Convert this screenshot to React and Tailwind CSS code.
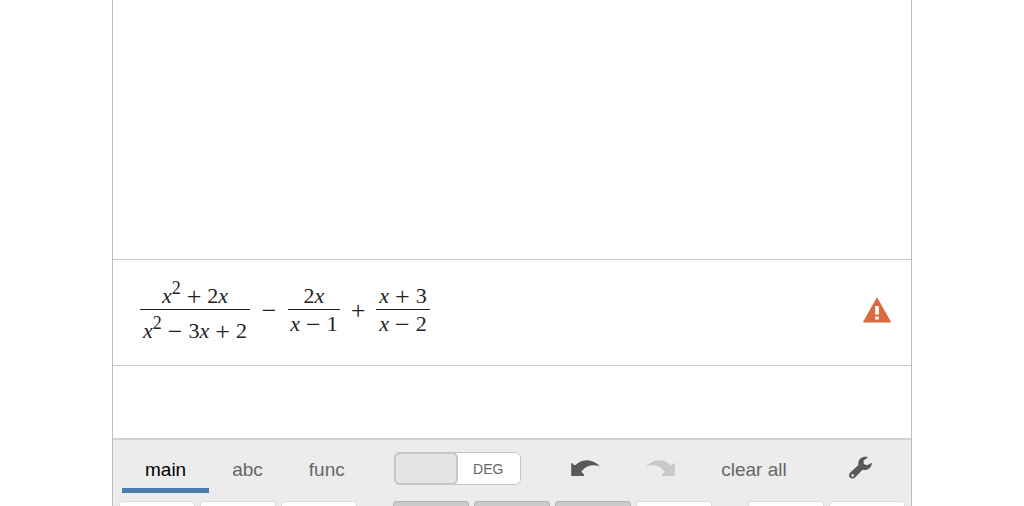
import React, { useState } from 'react';

const Var = ({ power }) => (
  <span>
    <i>x</i>
    {power && <sup className="text-[18px] leading-none">{power}</sup>}
  </span>
);

const Op = ({ children }) => (
  <span className="text-[26px] leading-[20px]">{children}</span>
);

const Fraction = ({ top, bottom, className, tall }) => (
  <span className={`flex flex-col items-center ${className}`}>
    <span className="flex h-7 items-end gap-1.5 pb-0.5 leading-[22px]">{top}</span>
    <span className="h-px w-full bg-[#222]" />
    <span className={`flex items-end gap-1.5 leading-[22px] ${tall ? 'h-8' : 'h-[25px]'}`}>{bottom}</span>
  </span>
);

const Expression = () => (
  <div className="flex items-start font-['Liberation_Serif',serif] text-[22px] text-[#222]">
    <Fraction
      tall
      className="w-[110px]"
      top={<><Var power="2" /><Op>+</Op><span>2<Var /></span></>}
      bottom={<><Var power="2" /><Op>−</Op><span>3<Var /></span><Op>+</Op><span>2</span></>}
    />
    <span className="flex h-15 w-[38px] items-center justify-center"><Op>−</Op></span>
    <Fraction
      className="w-[52px]"
      top={<span>2<Var /></span>}
      bottom={<><Var /><Op>−</Op><span>1</span></>}
    />
    <span className="flex h-15 w-9 items-center justify-center"><Op>+</Op></span>
    <Fraction
      className="w-[54px]"
      top={<><Var /><Op>+</Op><span>3</span></>}
      bottom={<><Var /><Op>−</Op><span>2</span></>}
    />
  </div>
);

const WarningIcon = () => (
  <svg width="28" height="26" viewBox="0 0 28 26" aria-hidden="true">
    <path d="M14 1 L27.5 25 H0.5 Z" fill="#d96c3f" stroke="#d96c3f" strokeLinejoin="round" />
    <path d="M12.2 9 h3.6 v8.5 h-3.6 Z M12.2 19.5 h3.6 v3 h-3.6 Z" fill="#fff" />
  </svg>
);

const UndoIcon = ({ className }) => (
  <svg width="29" height="17" viewBox="0 0 29 17" fill="currentColor" className={className} aria-hidden="true">
    <path d="M0.2 3.4 C0.2 2.8 0.8 2.8 1.2 3.2 L3.8 5.6 C8 1.6 13 -0.2 18 0.4 C22.4 0.9 26.2 3.2 28.8 6.6 C24.5 5 20.5 5 17.2 6.2 C14 7.5 11.8 9.4 10.2 11.8 L13 14.6 C13.6 15.4 13.2 16 12.6 16 H1.2 C0.5 16 0.2 15.7 0.2 15.2 Z" />
  </svg>
);

const WrenchIcon = () => (
  <svg width="24" height="24" viewBox="0 0 24 24" aria-hidden="true">
    <path
      fill="#58595b"
      fillRule="evenodd"
      d="M19 1.2 C14 -0.6 8.3 3 9.4 9 L1 16.8 C-0.6 18.5 -0.2 21.2 1.8 22.2 C3.4 23 5.2 22.5 6.3 21.2 L13.6 13.8 C18.2 15 22.6 12.2 23 6.8 L18 9.3 L14.8 8 L14.6 4.6 Z M3.7 18.2 a1.3 1.3 0 1 1 -0.1 2.6 a1.3 1.3 0 1 1 0.1 -2.6 Z"
    />
  </svg>
);

const tabs = ['main', 'abc', 'func'];

const keys = [
  { label: 'square' },
  { label: 'power' },
  { label: 'square root' },
  { label: '7', dark: true, group: true },
  { label: '8', dark: true },
  { label: '9', dark: true },
  { label: 'divide' },
  { label: 'percent', group: true },
  { label: 'fraction' }
];

const App = () => {
  const [activeTab, setActiveTab] = useState('main');
  const [degrees, setDegrees] = useState(true);

  return (
    <div className="h-screen overflow-hidden bg-white font-['Liberation_Sans',sans-serif]">
      <div className="mx-auto flex h-full max-w-[800px] flex-col border-x border-[#bdbdbd]">
        <main className="flex min-h-0 flex-1 flex-col">
          <div className="flex-1" />
          <section className="flex items-center justify-between border-y border-[#c8c8c8] pt-[21px] pr-5 pb-[23px] pl-[27px]">
            <Expression />
            <button type="button" aria-label="Show error" className="pb-1">
              <WarningIcon />
            </button>
          </section>
          <section className="h-18" />
        </main>

        <footer className="shrink-0 border-t-2 border-[#d2d2d2] bg-[#ececec]">
          <div className="flex h-[61px] items-center pr-[38px] pb-[5px] pl-[9px] text-[19px] text-[#666]">
            <nav className="flex self-stretch pb-[3px]">
              {tabs.map((tab) => (
                <button
                  key={tab}
                  type="button"
                  onClick={() => setActiveTab(tab)}
                  className={`border-b-[5px] px-[23px] pt-3 ${
                    tab === activeTab ? 'border-[#4c7cb0] text-black' : 'border-transparent'
                  }`}
                >
                  {tab}
                </button>
              ))}
            </nav>
            <label className="ml-[26px] flex h-[33px] w-[127px] cursor-pointer rounded-md border border-[#c6c6c6] bg-white">
              <input
                type="checkbox"
                aria-label="Degrees"
                checked={degrees}
                onChange={() => setDegrees(!degrees)}
                className="-m-px w-16 appearance-none rounded-md border-2 border-[#c6c6c6] bg-[#e4e4e4]"
              />
              <span className="flex-1 text-center text-[14px] leading-[32px]">
                {degrees ? 'DEG' : 'RAD'}
              </span>
            </label>
            <div className="flex flex-1 items-center justify-between pl-[50px]">
              <button type="button" aria-label="Undo">
                <UndoIcon className="text-[#58595b]" />
              </button>
              <button type="button" aria-label="Redo" disabled>
                <UndoIcon className="-scale-x-100 text-[#c9c9c9]" />
              </button>
              <button type="button" className="pt-1">clear all</button>
              <button type="button" aria-label="Settings" className="ml-4">
                <WrenchIcon />
              </button>
            </div>
          </div>
          <div className="flex h-[5px] gap-[5px] overflow-hidden px-1.5">
            {keys.map((key) => (
              <button
                key={key.label}
                type="button"
                aria-label={key.label}
                className={`h-10 flex-1 rounded-[3px] border ${key.group ? 'ml-[31px]' : ''} ${
                  key.dark ? 'border-[#b5b5b5] bg-[#cbcbcb]' : 'border-[#dcdcdc] bg-white'
                }`}
              />
            ))}
          </div>
        </footer>
      </div>
    </div>
  );
};

export default App;
